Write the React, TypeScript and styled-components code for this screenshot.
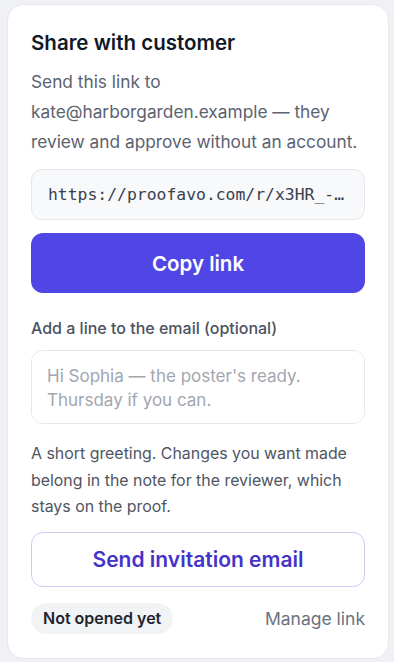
import React from "react";
import styled, { createGlobalStyle } from "styled-components";

const Global = createGlobalStyle`
  * { box-sizing: border-box; }
  html, body { margin: 0; padding: 0; background: #f0f1f4; }
  body { font-family: Inter, "Noto Sans", sans-serif; -webkit-font-smoothing: antialiased; }
`;

const Page = styled.div`
  padding: 4px 5px 4px 7px;
`;

const Card = styled.section`
  background: #ffffff;
  border: 1px solid #e6e8ec;
  border-radius: 16px;
  padding: 24px 23px 24px 23px;
  display: flex;
  flex-direction: column;
`;

const Title = styled.h2`
  margin: 0;
  font-size: 20.5px;
  line-height: 28px;
  font-weight: 600;
  color: #111827;
`;

const Lead = styled.p`
  margin: 10px 0 0;
  font-size: 17.3px;
  line-height: 30px;
  color: #5b6270;
`;

const UrlBox = styled.div`
  margin-top: 12px;
  height: 51px;
  display: flex;
  align-items: center;
  padding: 0 16px;
  background: #f8f9fb;
  border: 1px solid #e5e7eb;
  border-radius: 11px;
  font-family: "DejaVu Sans Mono", "Liberation Mono", monospace;
  font-size: 16.4px;
  color: #3a404c;
  white-space: nowrap;
`;

const Button = styled.button<{ $variant: "primary" | "outline" }>`
  display: flex;
  align-items: center;
  justify-content: center;
  width: 100%;
  font-family: inherit;
  font-weight: 600;
  border-radius: 12px;
  cursor: pointer;
  ${(p) =>
    p.$variant === "primary"
      ? `
    height: 60px;
    margin-top: 13px;
    font-size: 20.5px;
    background: #5046e5;
    color: #ffffff;
    border: none;
  `
      : `
    height: 55px;
    margin-top: 0;
    font-size: 21px;
    background: #ffffff;
    color: #4533c9;
    border: 1px solid #c9cdf3;
  `}
`;

const Label = styled.label`
  margin-top: 25px;
  font-size: 16px;
  line-height: 20px;
  font-weight: 500;
  color: #4b5260;
`;

const TextArea = styled.textarea`
  margin-top: 12px;
  height: 74px;
  width: 100%;
  resize: none;
  padding: 13px 15px;
  border: 1px solid #e5e7eb;
  border-radius: 12px;
  font-family: inherit;
  font-size: 17px;
  line-height: 24px;
  color: #111827;
  outline: none;
  &::placeholder {
    color: #a1a6b0;
  }
`;

const Help = styled.p`
  margin: 17px 0 11px;
  font-size: 15.9px;
  line-height: 26.5px;
  color: #4f5562;
`;

const Footer = styled.div`
  margin-top: 16px;
  display: flex;
  align-items: center;
  justify-content: space-between;
`;

const Pill = styled.span`
  display: inline-flex;
  align-items: center;
  height: 31px;
  padding: 0 12px;
  border-radius: 16px;
  background: #f2f3f5;
  font-size: 16px;
  font-weight: 600;
  color: #1f2430;
`;

const LinkButton = styled.button`
  background: none;
  border: none;
  padding: 0;
  font-family: inherit;
  font-size: 17.5px;
  color: #6b7280;
  cursor: pointer;
`;

export default function App() {
  return (
    <Page>
      <Global />
      <Card>
        <Title>Share with customer</Title>
        <Lead>
          Send this link to kate@harborgarden.example — they review and approve
          without an account.
        </Lead>
        <UrlBox>https://proofavo.com/r/x3HR_-…</UrlBox>
        <Button $variant="primary">Copy link</Button>
        <Label htmlFor="note">Add a line to the email (optional)</Label>
        <TextArea
          id="note"
          placeholder="Hi Sophia — the poster's ready. Thursday if you can."
        />
        <Help>
          A short greeting. Changes you want made belong in the note for the
          reviewer, which stays on the proof.
        </Help>
        <Button $variant="outline">Send invitation email</Button>
        <Footer>
          <Pill>Not opened yet</Pill>
          <LinkButton>Manage link</LinkButton>
        </Footer>
      </Card>
    </Page>
  );
}
